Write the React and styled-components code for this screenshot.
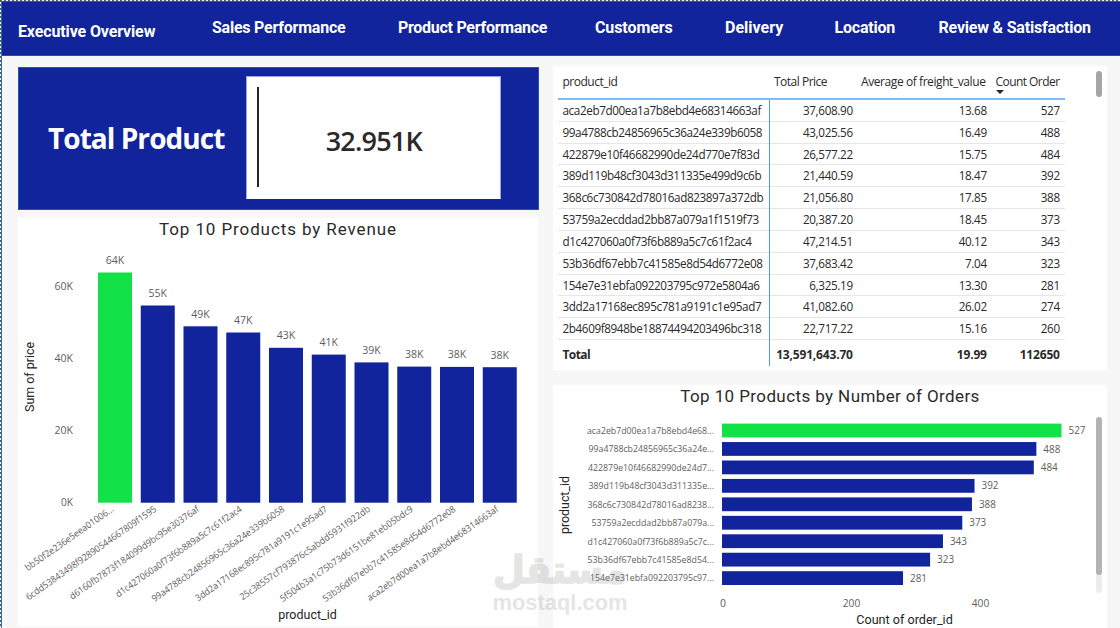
import React from "react";
import styled, { createGlobalStyle } from "styled-components";

const NAVY = "#11249c";
const GREEN = "#12e148";
const UI = `"Open Sans", "Noto Sans", sans-serif`;
const DIN = `Roboto, "Liberation Sans", sans-serif`;

const GlobalStyle = createGlobalStyle`
  * { box-sizing: border-box; }
  body { margin: 0; background: #f7f7f7; overflow: hidden; }
`;

const Page = styled.div`
  position: relative;
  width: 1120px;
  height: 628px;
  overflow: hidden;
  background: #f7f7f7;
  color: #2b2a29;
  font-family: ${UI};
  padding: 1px 0 0 1px;
  &::before {
    content: "";
    position: absolute;
    inset: 0 0 auto 0;
    height: 1px;
    background: repeating-linear-gradient(90deg, #4d5a60 0 2px, #fff 2px 4px);
  }
  &::after {
    content: "";
    position: absolute;
    inset: 0 auto 0 0;
    width: 1px;
    background: repeating-linear-gradient(180deg, #4d5a70 0 2px, #fff 2px 4px);
  }
`;

const Canvas = styled.div`
  height: 627px;
  border-left: 1px solid #2f6cb0;
`;

const Header = styled.nav`
  display: grid;
  grid-template-columns: 194px 186px 197px 130px 109.5px 104px 160px;
  height: 55px;
  padding: 16px 0 0 16px;
  background: ${NAVY};
  border-top: 1px solid #1a5aa8;
  border-bottom: 1px solid #1453b5;
`;

const NavItem = styled.a`
  color: #fff;
  font: 700 16px/20px ${DIN};
  letter-spacing: ${(p) => p.$spacing}px;
  white-space: nowrap;
  padding-top: ${(p) => (p.$current ? 4 : 0)}px;
`;

const Columns = styled.main`
  display: flex;
  gap: 14px;
  padding-left: 16px;
`;

const LeftColumn = styled.div`
  display: flex;
  flex-direction: column;
  gap: 8px;
  width: 521px;
  padding-top: 11px;
`;

const RightColumn = styled.div`
  display: flex;
  flex-direction: column;
  gap: 15px;
  width: 554px;
  padding-top: 10px;
`;

const Kpi = styled.section`
  display: flex;
  height: 143px;
  padding: 8px 0 0 29px;
  background: ${NAVY};
  border: 1px solid #1f55b5;
`;

const KpiLabel = styled.h1`
  margin: 0;
  width: 198px;
  padding-top: 42px;
  color: #fff;
  font: 700 28px/40px ${UI};
  letter-spacing: -0.95px;
  white-space: nowrap;
`;

const KpiCard = styled.div`
  display: flex;
  align-items: center;
  width: 255px;
  height: 123px;
  padding-left: 10px;
  background: #fff;
  border: 1px solid #9aa3dc;
  border-bottom-color: #fff;
`;

const KpiRule = styled.div`
  width: 1.5px;
  height: 100px;
  margin-bottom: 1px;
  background: #252423;
`;

const KpiValue = styled.div`
  flex: 1;
  padding: 6px 11px 0 0;
  text-align: center;
  font: 600 27px/36px ${UI};
  letter-spacing: -0.8px;
`;

const Panel = styled.section`
  width: ${(p) => p.$w}px;
  height: ${(p) => p.$h}px;
  background: #fff;
`;

const PanelTitle = styled.h2`
  margin: 0;
  height: 24px;
  text-align: center;
  font: 400 17px/23px ${DIN};
  letter-spacing: ${(p) => p.$spacing}px;
`;

const TablePanel = styled(Panel)`
  display: flex;
  justify-content: space-between;
  padding: 0 5px;
`;

const TableScroll = styled.div`
  width: 507px;
`;

const row = `
  display: grid;
  grid-template-columns: 212px 88px 134px 73px;
`;

const HeadRow = styled.div`
  ${row}
  height: 34px;
  border-bottom: 2px solid #7dbcf6;
`;

const HeadCell = styled.div`
  position: relative;
  padding: 7px 0 0 ${(p) => p.$pad}px;
  font-size: 12px;
  line-height: 18px;
  letter-spacing: ${(p) => p.$spacing}px;
  white-space: nowrap;
`;

const SortArrow = styled.svg`
  position: absolute;
  left: 4px;
  top: 24px;
`;

const Row = styled.div`
  ${row}
  height: 21.84px;
  border-bottom: 1px solid #e6e6e6;
`;

const Cell = styled.div`
  padding: 0 5.2px 0 4.5px;
  text-align: ${(p) => (p.$id ? "left" : "right")};
  border-right: ${(p) => (p.$id ? "1px solid #4a9cf0" : "0")};
  margin-bottom: -1px;
  font-size: 11.7px;
  font-weight: ${(p) => (p.$bold ? 700 : 400)};
  line-height: 21.6px;
  letter-spacing: ${(p) => (p.$id ? -0.39 : -0.33)}px;
  white-space: nowrap;
`;

const TotalRow = styled.div`
  ${row}
  height: 25px;
  & > div { line-height: 29px; height: 26px; font-size: 12px; letter-spacing: -0.17px; }
  & > div:first-child { letter-spacing: -0.6px; }
`;

const Thumb = styled.div`
  width: 6px;
  height: 26px;
  margin-top: 5px;
  border-radius: 3px;
  background: #a6a6a6;
`;

const Chart = styled.svg`
  display: block;
  font-family: ${UI};
`;

const Watermark = styled.svg`
  position: absolute;
  left: 485px;
  top: 540px;
  opacity: 0.2;
`;

const NAV = [
  ["Executive Overview", -0.13],
  ["Sales Performance", -0.23],
  ["Product Performance", -0.28],
  ["Customers", -0.1],
  ["Delivery", 0],
  ["Location", -0.2],
  ["Review & Satisfaction", -0.2],
];

const ROWS = [
  ["aca2eb7d00ea1a7b8ebd4e68314663af", "37,608.90", "13.68", "527"],
  ["99a4788cb24856965c36a24e339b6058", "43,025.56", "16.49", "488"],
  ["422879e10f46682990de24d770e7f83d", "26,577.22", "15.75", "484"],
  ["389d119b48cf3043d311335e499d9c6b", "21,440.59", "18.47", "392"],
  ["368c6c730842d78016ad823897a372db", "21,056.80", "17.85", "388"],
  ["53759a2ecddad2bb87a079a1f1519f73", "20,387.20", "18.45", "373"],
  ["d1c427060a0f73f6b889a5c7c61f2ac4", "47,214.51", "40.12", "343"],
  ["53b36df67ebb7c41585e8d54d6772e08", "37,683.42", "7.04", "323"],
  ["154e7e31ebfa092203795c972e5804a6", "6,325.19", "13.30", "281"],
  ["3dd2a17168ec895c781a9191c1e95ad7", "41,082.60", "26.02", "274"],
  ["2b4609f8948be18874494203496bc318", "22,717.22", "15.16", "260"],
];

// id, value label, bar top, label length
const REVENUE = [
  ["bb50f2e236e5eea01006...", "64K", 272.5, 106],
  ["6cdd53843498f92890544667809f1595", "55K", 305.5, 157],
  ["d6160fb7873f184099d9bc95e30376af", "49K", 326.3, 156],
  ["d1c427060a0f73f6b889a5c7c61f2ac4", "47K", 332.5, 152],
  ["99a4788cb24856965c36a24e339b6058", "43K", 347.8, 160],
  ["3dd2a17168ec895c781a9191c1e95ad7", "41K", 354.6, 159],
  ["25c38557cf793876c5abdd5931f922db", "39K", 362.4, 157],
  ["5f504b3a1c75b73d6151be81eb05bdc9", "38K", 366.6, 160],
  ["53b36df67ebb7c41585e8d54d6772e08", "38K", 366.9, 160],
  ["aca2eb7d00ea1a7b8ebd4e68314663af", "38K", 367.2, 158],
];

// id, orders, label length
const ORDERS = [
  ["aca2eb7d00ea1a7b8ebd4e68...", 527, 127],
  ["99a4788cb24856965c36a24e...", 488, 125.5],
  ["422879e10f46682990de24d7...", 484, 126],
  ["389d119b48cf3043d311335e...", 392, 125.5],
  ["368c6c730842d78016ad8238...", 388, 126.5],
  ["53759a2ecddad2bb87a079a...", 373, 122.5],
  ["d1c427060a0f73f6b889a5c7c...", 343, 126.5],
  ["53b36df67ebb7c41585e8d54...", 323, 126.5],
  ["154e7e31ebfa092203795c97...", 281, 124],
];

function Label({ w, children, ...rest }) {
  return (
    <text textLength={w} lengthAdjust="spacingAndGlyphs" {...rest}>
      {children}
    </text>
  );
}

function RevenueChart() {
  return (
    <Chart width="520" height="384" viewBox="18 242 520 384">
      {["0K", "20K", "40K", "60K"].map((t, i) => (
        <Label key={t} x="73" y={506 - i * 72} w={i ? 18.5 : 12} fontSize="10.5" fill="#605e5c" textAnchor="end">
          {t}
        </Label>
      ))}
      {REVENUE.map(([id, value, top, w], i) => {
        const x = 98 + i * 42.75;
        return (
          <g key={id}>
            <rect x={x} y={top} width="34" height={502.7 - top} fill={i ? NAVY : GREEN} />
            <Label x={x + 17} y={top - 8.5} w="18.5" fontSize="10.5" fill="#605e5c" textAnchor="middle">
              {value}
            </Label>
            <Label
              transform={`translate(${x + 16.5} 510.5) rotate(-35)`}
              w={w}
              fontSize="9.3"
              fill="#605e5c"
              textAnchor="end"
            >
              {id}
            </Label>
          </g>
        );
      })}
      <Label x="307.5" y="619" w="58.5" fontFamily={DIN} fontSize="12" fill="#252423" textAnchor="middle">
        product_id
      </Label>
      <Label transform="translate(34 377) rotate(-90)" w="70" fontFamily={DIN} fontSize="12" fill="#252423" textAnchor="middle">
        Sum of price
      </Label>
    </Chart>
  );
}

function OrdersChart() {
  return (
    <Chart width="554" height="219" viewBox="553 409 554 219">
      {ORDERS.map(([id, value, w], i) => {
        const cy = 430.5 + i * 18.45;
        const len = value * 0.6442;
        return (
          <g key={id}>
            <Label x="714" y={cy + 3.3} w={w} fontSize="9.3" fill="#605e5c" textAnchor="end">
              {id}
            </Label>
            <rect x="722" y={cy - 6.9} width={len} height="13.8" fill={i ? NAVY : GREEN} />
            <Label x={722 + len + 7} y={cy + 3.6} w="17" fontSize="10.5" fill="#605e5c">
              {value}
            </Label>
          </g>
        );
      })}
      {[["0", 723, 6], ["200", 851.5, 17.5], ["400", 980.5, 17.5]].map(([t, x, w]) => (
        <Label key={t} x={x} y="607" w={w} fontSize="10.5" fill="#605e5c" textAnchor="middle">
          {t}
        </Label>
      ))}
      <Label x="904.5" y="624" w="96.5" fontFamily={DIN} fontSize="12" fill="#252423" textAnchor="middle">
        Count of order_id
      </Label>
      <Label transform="translate(569 505) rotate(-90)" w="58" fontFamily={DIN} fontSize="12" fill="#252423" textAnchor="middle">
        product_id
      </Label>
      <rect x="1096" y="417" width="6" height="176" rx="3" fill="#ececf0" />
      <rect x="1096" y="417" width="6" height="158" rx="3" fill="#b3b3b3" />
    </Chart>
  );
}

export default function App() {
  return (
    <Page>
      <GlobalStyle />
      <Canvas>
        <Header>
          {NAV.map(([label, spacing], i) => (
            <NavItem key={label} $current={i === 0} $spacing={spacing}>
              {label}
            </NavItem>
          ))}
        </Header>
        <Columns>
          <LeftColumn>
            <Kpi>
              <KpiLabel>Total Product</KpiLabel>
              <KpiCard>
                <KpiRule />
                <KpiValue>32.951K</KpiValue>
              </KpiCard>
            </Kpi>
            <Panel $w={520} $h={408}>
              <PanelTitle $spacing={0.9}>Top 10 Products by Revenue</PanelTitle>
              <RevenueChart />
            </Panel>
          </LeftColumn>
          <RightColumn>
            <TablePanel $w={554} $h={304}>
              <TableScroll>
                <HeadRow>
                  <HeadCell $pad={4.5} $spacing={-0.5}>product_id</HeadCell>
                  <HeadCell $pad={4} $spacing={-0.5}>Total Price</HeadCell>
                  <HeadCell $pad={3} $spacing={-0.42}>Average of freight_value</HeadCell>
                  <HeadCell $pad={3.5} $spacing={-0.55}>
                    Count Order
                    <SortArrow width="8" height="4" viewBox="0 0 8 4">
                      <path d="M0 0h8L4 4z" fill="#252423" />
                    </SortArrow>
                  </HeadCell>
                </HeadRow>
                {ROWS.map(([id, price, freight, count]) => (
                  <Row key={id}>
                    <Cell $id>{id}</Cell>
                    <Cell>{price}</Cell>
                    <Cell>{freight}</Cell>
                    <Cell>{count}</Cell>
                  </Row>
                ))}
                <TotalRow>
                  <Cell $id $bold>Total</Cell>
                  <Cell $bold>13,591,643.70</Cell>
                  <Cell $bold>19.99</Cell>
                  <Cell $bold>112650</Cell>
                </TotalRow>
              </TableScroll>
              <Thumb />
            </TablePanel>
            <Panel $w={554} $h={243}>
              <PanelTitle $spacing={0.4}>Top 10 Products by Number of Orders</PanelTitle>
              <OrdersChart />
            </Panel>
          </RightColumn>
        </Columns>
      </Canvas>
      <Watermark width="150" height="80" viewBox="485 540 150 80" fill="#808078" fontWeight="700">
        <Label
          x="560"
          y="583"
          w="134"
          fontFamily='"DejaVu Sans", sans-serif'
          fontSize="38"
          textAnchor="middle"
          direction="rtl"
          stroke="#808078"
          strokeWidth="1.6"
          strokeLinejoin="round"
        >
          مستقل
        </Label>
        <Label x="560" y="610" w="135" fontFamily='"Liberation Sans", sans-serif' fontSize="22" textAnchor="middle">
          mostaql.com
        </Label>
      </Watermark>
    </Page>
  );
}
